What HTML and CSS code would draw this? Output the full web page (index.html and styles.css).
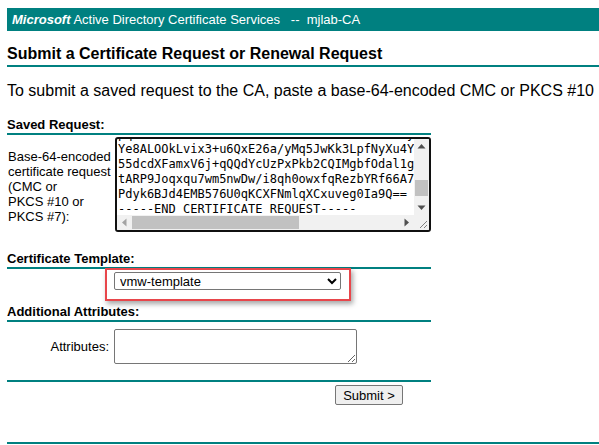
FILE: index.html
```html
<!DOCTYPE html>
<html lang="en">
<head>
<meta charset="utf-8">
<title>Microsoft Active Directory Certificate Services</title>
<link rel="stylesheet" href="styles.css">
</head>
<body>
<div class="topbar"><b><i>Microsoft</i></b> Active Directory Certificate Services &nbsp;&nbsp;--&nbsp;&nbsp;mjlab-CA</div>
<h1 class="title">Submit a Certificate Request or Renewal Request</h1>
<p class="intro">To submit a saved request to the CA, paste a base-64-encoded CMC or PKCS #10</p>
<form class="form">
  <div class="section">Saved Request:</div>
  <div class="row row-saved">
    <label class="label-left">Base-64-encoded<br>certificate request<br>(CMC or<br>PKCS #10 or<br>PKCS #7):</label>
    <div class="ta">
      <div class="ta-text"><div class="ta-lines">pqKTM3WHBeAT7xN0hLbZ1fE5cNOuViRI2kSXm4tLyIa0c+H8RtUvWo3nQeDxJs2K
Ye8ALOOkLvix3+u6QxE26a/yMq5JwKk3LpfNyXu4YH2eR0aT9mCdLw1BsZQ8Vn7k
55dcdXFamxV6j+qQQdYcUzPxPkb2CQIMgbfOdal1gK4sTzW0eR3uN8vLbHcA2yMq
tARP9Joqxqu7wm5nwDw/i8qh0owxfqRezbYRf66A7cX1LkV3hM9uQe2sPdT0gNbW
Pdyk6BJd4EMB576U0qKCXFNmlqXCxuveg0Ia9Q==
-----END CERTIFICATE REQUEST-----
</div></div>
      <div class="vbar">
        <div class="sbtn"><svg width="15" height="15" viewBox="0 0 15 15"><polygon points="3.5,9.5 11.5,9.5 7.5,5" fill="#505050"/></svg></div>
        <div class="vtrack"><div class="vthumb"></div></div>
        <div class="sbtn"><svg width="15" height="15" viewBox="0 0 15 15"><polygon points="3.5,5.5 11.5,5.5 7.5,10" fill="#505050"/></svg></div>
      </div>
      <div class="hbar">
        <div class="sbtn"><svg width="15" height="15" viewBox="0 0 15 15"><polygon points="9.5,3.5 9.5,11.5 5,7.5" fill="#a3a3a3"/></svg></div>
        <div class="htrack"><div class="hthumb"></div></div>
        <div class="sbtn"><svg width="15" height="15" viewBox="0 0 15 15"><polygon points="5.5,3.5 5.5,11.5 10,7.5" fill="#505050"/></svg></div>
      </div>
      <div class="corner"><svg width="15" height="15" viewBox="0 0 15 15"><line x1="13" y1="6" x2="6" y2="13" stroke="#808080" stroke-width="1"/><line x1="13" y1="10" x2="10" y2="13" stroke="#808080" stroke-width="1"/></svg></div>
    </div>
  </div>

  <div class="section section-gap">Certificate Template:</div>
  <div class="row row-select">
    <span></span>
    <select class="select"><option>vmw-template</option></select>
    <div class="highlight"></div>
  </div>

  <div class="section section-gap2">Additional Attributes:</div>
  <div class="row row-attr">
    <label class="label-right">Attributes:</label>
    <textarea class="attr"></textarea>
  </div>

  <div class="divider"></div>
  <div class="submit-row">
    <button type="button" class="submit">Submit &gt;</button>
  </div>
</form>
<div class="footer-line"></div>
</body>
</html>
```

FILE: styles.css
```css
html, body {
  margin: 0;
}

body {
  padding: 8px 0 0 7px;
  font-family: "Liberation Sans", Arial, sans-serif;
  color: #000;
  background: #fff;
  overflow: hidden;
}

.topbar {
  height: 23px;
  line-height: 23px;
  background: #008080;
  color: #fff;
  font-size: 13px;
  padding-left: 5px;
  white-space: nowrap;
}

.title {
  margin: 14px 0 0;
  font-size: 16px;
  line-height: 18px;
  font-weight: bold;
  padding-bottom: 2px;
  border-bottom: 2px solid #008080;
}

.intro {
  margin: 15px 0 0;
  font-size: 16px;
  line-height: 18px;
  white-space: nowrap;
}

.form {
  width: 424px;
  margin: 17px 0 0;
}

.section {
  font-size: 13px;
  font-weight: bold;
  line-height: 15px;
  padding-bottom: 1px;
  border-bottom: 2px solid #008080;
}

.section-gap {
  margin-top: 19px;
}

.section-gap2 {
  margin-top: 14px;
}

.row {
  display: grid;
  grid-template-columns: 107px 1fr;
  font-size: 13px;
  line-height: 15px;
}

.row-saved {
  margin-top: 2px;
}

.label-left {
  margin-top: 12px;
  padding-left: 1px;
}

.ta {
  margin-left: 1px;
  width: 316px;
  height: 95px;
  box-sizing: border-box;
  border: 2px solid #101010;
  border-radius: 3px;
  display: grid;
  grid-template-columns: 1fr 15px;
  grid-template-rows: 1fr 15px;
  overflow: hidden;
  background: #fff;
}

.ta-text {
  overflow: hidden;
  padding-left: 1px;
  font-family: "DejaVu Sans Mono", "Liberation Mono", monospace;
  font-size: 12px;
  line-height: 15px;
  white-space: pre;
  color: #000;
}

.ta-lines {
  margin-top: -12px;
}

.sbtn {
  width: 15px;
  height: 15px;
}

.sbtn svg,
.corner svg {
  display: block;
}

.vbar {
  display: grid;
  grid-template-rows: 15px 1fr 15px;
  background: #f1f1f1;
}

.vtrack {
  overflow: hidden;
}

.vthumb {
  margin: 26px 1px 0;
  height: 16px;
  background: #c1c1c1;
}

.hbar {
  display: grid;
  grid-template-columns: 15px 1fr 15px;
  background: #f1f1f1;
}

.htrack {
  overflow: hidden;
}

.hthumb {
  margin: 1px 0;
  width: 167px;
  height: 13px;
  background: #c1c1c1;
}

.corner {
  background: #f1f1f1;
}

.row-select {
  position: relative;
  padding-top: 3px;
}

.select {
  width: 227px;
  height: 18px;
  box-sizing: border-box;
  font-family: "Liberation Sans", Arial, sans-serif;
  font-size: 13px;
  border: 1px solid #767676;
  border-radius: 2px;
  background: #fff;
  color: #000;
  padding: 0 0 0 1px;
  margin: 0;
}

.highlight {
  position: absolute;
  left: 98px;
  top: -1px;
  width: 246px;
  height: 33px;
  box-sizing: border-box;
  border: 2px solid #e8464b;
  box-shadow: 2px 3px 5px rgba(0, 0, 0, 0.35);
  pointer-events: none;
}

.row-attr {
  margin-top: 7px;
  align-items: center;
}

.label-right {
  text-align: right;
  padding-right: 5px;
}

.attr {
  display: block;
  width: 243px;
  height: 35px;
  box-sizing: border-box;
  border: 1px solid #767676;
  border-radius: 2px;
  margin: 0;
  padding: 2px;
  font-family: "Liberation Mono", monospace;
  font-size: 13px;
  resize: both;
}

.divider {
  height: 2px;
  background: #008080;
  margin-top: 16px;
}

.submit-row {
  display: flex;
  justify-content: flex-end;
  padding-right: 28px;
  margin-top: 3px;
}

.submit {
  width: 68px;
  height: 20px;
  box-sizing: border-box;
  padding: 0;
  margin: 0;
  font-family: "Liberation Sans", Arial, sans-serif;
  font-size: 13px;
  color: #000;
  background: #efefef;
  border: 1px solid #767676;
  border-radius: 2px;
}

.footer-line {
  height: 2px;
  background: #008080;
  margin-top: 37px;
}
```
